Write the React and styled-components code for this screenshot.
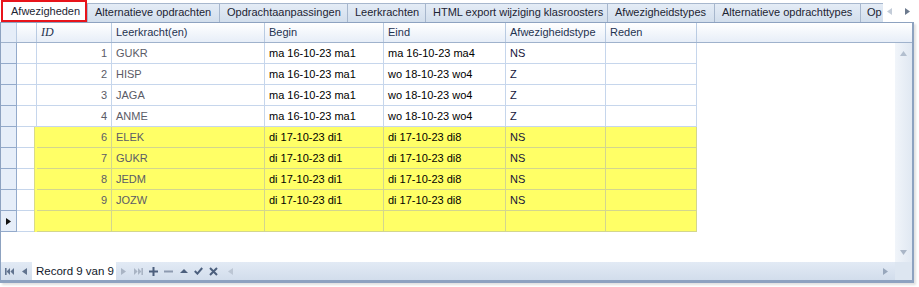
import React from "react";
import styled, { createGlobalStyle } from "styled-components";

const GlobalStyle = createGlobalStyle`
  html, body {
    margin: 0;
    padding: 0;
    background: #fff;
  }
  body {
    font-family: "Liberation Sans", Arial, sans-serif;
    font-size: 11px;
    color: #1e2b3c;
  }
`;

const tabs = [
  { label: "Afwezigheden", w: 86, active: true },
  { label: "Alternatieve opdrachten", w: 133, first: true },
  { label: "Opdrachtaanpassingen", w: 128 },
  { label: "Leerkrachten", w: 78 },
  { label: "HTML export wijziging klasroosters", w: 182 },
  { label: "Afwezigheidstypes", w: 107 },
  { label: "Alternatieve opdrachttypes", w: 146 },
  { label: "Op", w: 22, tight: true },
];

const rows = [
  { id: 1, who: "GUKR", begin: "ma 16-10-23 ma1", end: "ma 16-10-23 ma4", type: "NS" },
  { id: 2, who: "HISP", begin: "ma 16-10-23 ma1", end: "wo 18-10-23 wo4", type: "Z" },
  { id: 3, who: "JAGA", begin: "ma 16-10-23 ma1", end: "wo 18-10-23 wo4", type: "Z" },
  { id: 4, who: "ANME", begin: "ma 16-10-23 ma1", end: "wo 18-10-23 wo4", type: "Z" },
  { id: 6, who: "ELEK", begin: "di 17-10-23 di1", end: "di 17-10-23 di8", type: "NS", hl: true },
  { id: 7, who: "GUKR", begin: "di 17-10-23 di1", end: "di 17-10-23 di8", type: "NS", hl: true },
  { id: 8, who: "JEDM", begin: "di 17-10-23 di1", end: "di 17-10-23 di8", type: "NS", hl: true },
  { id: 9, who: "JOZW", begin: "di 17-10-23 di1", end: "di 17-10-23 di8", type: "NS", hl: true },
];

const COLS = "16px 20px 75px 153px 119px 122px 100px 91px 1fr";

const Tri = ({ dir = "right", color = "#555", size = 7 }) => {
  const pts = {
    right: "1,0 6,3.5 1,7",
    left: "6,0 1,3.5 6,7",
    up: "0,6 3.5,1 7,6",
    down: "0,1 3.5,6 7,1",
  }[dir];
  return (
    <svg width={size} height={size} viewBox="0 0 7 7">
      <polygon points={pts} fill={color} />
    </svg>
  );
};

const App = () => {
  return (
    <Page>
      <GlobalStyle />
      <TabStrip>
        <TabList>
          {tabs.map((t) => (
            <Tab
              key={t.label}
              $w={t.w}
              $active={t.active}
              $first={t.first}
              $tight={t.tight}
            >
              {t.label}
            </Tab>
          ))}
        </TabList>
        <TabArrows>
          <Tri dir="left" color="#c3ccd8" />
          <Tri dir="right" color="#6c7a8e" />
        </TabArrows>
      </TabStrip>

      <Frame>
        <HeaderRow>
          <HeadCell $ind />
          <HeadCell />
          <HeadCell $serif>ID</HeadCell>
          <HeadCell>Leerkracht(en)</HeadCell>
          <HeadCell>Begin</HeadCell>
          <HeadCell>Eind</HeadCell>
          <HeadCell>Afwezigheidstype</HeadCell>
          <HeadCell>Reden</HeadCell>
          <HeadCell $last />
        </HeaderRow>

        <Body>
          <Rows>
            {rows.map((r) => (
              <Row key={r.id}>
                <IndCell />
                <Cell />
                <Cell $hl={r.hl} $right $muted $edge={r.hl}>
                  {r.id}
                </Cell>
                <Cell $hl={r.hl} $muted>
                  {r.who}
                </Cell>
                <Cell $hl={r.hl}>{r.begin}</Cell>
                <Cell $hl={r.hl}>{r.end}</Cell>
                <Cell $hl={r.hl} $navy>
                  {r.type}
                </Cell>
                <Cell $hl={r.hl} />
                <Filler />
              </Row>
            ))}
            <Row>
              <IndCell>
                <Tri dir="right" color="#111" size={7} />
              </IndCell>
              <Cell />
              <Cell $hl $edge />
              <Cell $hl />
              <Cell $hl />
              <Cell $hl />
              <Cell $hl />
              <Cell $hl />
              <Filler />
            </Row>
          </Rows>
          <VScroll>
            <Tri dir="up" color="#b3bfcf" />
            <Tri dir="down" color="#aab6c7" />
          </VScroll>
        </Body>

        <Footer>
          <Navigator>
            <NavButton $w={16}>
              <svg width="9" height="7" viewBox="0 0 9 7">
                <rect x="0" y="0" width="1.6" height="7" fill="#61738f" />
                <polygon points="5,0 1.6,3.5 5,7" fill="#61738f" />
                <polygon points="9,0 5.4,3.5 9,7" fill="#61738f" />
              </svg>
            </NavButton>
            <NavButton $w={15}>
              <Tri dir="left" color="#61738f" />
            </NavButton>
            <RecordBox>Record 9 van 9</RecordBox>
            <NavButton $w={15}>
              <Tri dir="right" color="#a9b4c4" />
            </NavButton>
            <NavButton $w={15}>
              <svg width="9" height="7" viewBox="0 0 9 7">
                <polygon points="0,0 3.6,3.5 0,7" fill="#a9b4c4" />
                <polygon points="4,0 7.4,3.5 4,7" fill="#a9b4c4" />
                <rect x="7.4" y="0" width="1.6" height="7" fill="#a9b4c4" />
              </svg>
            </NavButton>
            <NavButton $w={15}>
              <svg width="9" height="9" viewBox="0 0 9 9">
                <rect x="3.5" y="0" width="2" height="9" fill="#4c5f7d" />
                <rect x="0" y="3.5" width="9" height="2" fill="#4c5f7d" />
              </svg>
            </NavButton>
            <NavButton $w={15}>
              <svg width="9" height="9" viewBox="0 0 9 9">
                <rect x="0" y="3.5" width="9" height="2" fill="#8d9ab0" />
              </svg>
            </NavButton>
            <NavButton $w={15}>
              <svg width="8" height="6" viewBox="0 0 8 6">
                <polygon points="0,5 4,1 8,5" fill="#4c5f7d" />
              </svg>
            </NavButton>
            <NavButton $w={15}>
              <svg width="9" height="8" viewBox="0 0 9 8">
                <polyline points="0.8,4 3.4,6.6 8.2,1" fill="none" stroke="#4c5f7d" strokeWidth="2" />
              </svg>
            </NavButton>
            <NavButton $w={15}>
              <svg width="9" height="9" viewBox="0 0 9 9">
                <path d="M1 1 L8 8 M8 1 L1 8" stroke="#4c5f7d" strokeWidth="2" />
              </svg>
            </NavButton>
          </Navigator>
          <HScroll>
            <Tri dir="left" color="#bcc6d4" />
            <Tri dir="right" color="#98a7bc" />
          </HScroll>
          <Corner />
        </Footer>
      </Frame>
    </Page>
  );
};

export default App;

const Page = styled.div`
  width: 919px;
  height: 287px;
  overflow: hidden;
  background: #fff;
`;

const TabStrip = styled.div`
  display: flex;
  align-items: flex-end;
  height: 22px;
`;

const TabList = styled.div`
  display: flex;
  align-items: flex-end;
  width: 882px;
  flex: none;
  overflow: hidden;
  padding-left: 1px;
  height: 22px;
`;

const Tab = styled.div`
  flex: none;
  box-sizing: border-box;
  width: ${(p) => p.$w}px;
  height: ${(p) => (p.$active ? 22 : 19)}px;
  line-height: ${(p) => (p.$active ? 18 : 17)}px;
  padding-left: ${(p) => (p.$active ? 8 : p.$tight ? 6 : 7)}px;
  white-space: nowrap;
  overflow: hidden;
  color: #1c2433;
  background: ${(p) =>
    p.$active ? "#fff" : "linear-gradient(#e4ecf6, #d2deec)"};
  border: ${(p) => (p.$active ? "2px solid #e8141b" : "1px solid #a7b7cd")};
  border-left-width: ${(p) => (p.$active ? 2 : p.$first ? 1 : 0)}px;
  border-right-width: ${(p) => (p.$tight ? 0 : p.$active ? 2 : 1)}px;
  border-bottom: ${(p) => (p.$active ? "2px solid #e8141b" : "none")};
`;

const TabArrows = styled.div`
  flex: 1;
  display: flex;
  align-items: center;
  gap: 11px;
  height: 22px;
  padding-left: 3px;
`;

const Frame = styled.div`
  width: 911px;
  display: flex;
  flex-direction: column;
  border: 1px solid #8da2c0;
  border-right-width: 2px;
  border-bottom-width: 3px;
  box-shadow: 2px 2px 2px rgba(0, 0, 0, 0.12);
`;

const HeaderRow = styled.div`
  display: grid;
  grid-template-columns: ${COLS};
  height: 20px;
  box-sizing: border-box;
  border-bottom: 1px solid #9fb2cc;
  background: linear-gradient(#ffffff, #e7eef8);
`;

const HeadCell = styled.div`
  box-sizing: border-box;
  border-right: ${(p) => (p.$last ? "none" : "1px solid #b9cbe2")};
  background: ${(p) => (p.$ind ? "#e5edf8" : "transparent")};
  padding-left: 4px;
  line-height: 19px;
  color: #1f3350;
  white-space: nowrap;
  overflow: hidden;
  font-family: ${(p) =>
    p.$serif ? '"Liberation Serif", serif' : '"Liberation Sans", Arial, sans-serif'};
  font-style: ${(p) => (p.$serif ? "italic" : "normal")};
  font-size: ${(p) => (p.$serif ? "12px" : "11px")};
`;

const Body = styled.div`
  display: flex;
  height: 219px;
`;

const Rows = styled.div`
  width: 894px;
  background: #fff;
`;

const Row = styled.div`
  display: grid;
  grid-template-columns: ${COLS};
  height: 21px;
`;

const IndCell = styled.div`
  box-sizing: border-box;
  background: #e6eef9;
  border-right: 1px solid #93aacb;
  border-bottom: 1px solid #93aacb;
  display: flex;
  align-items: center;
  justify-content: center;
`;

const Cell = styled.div`
  box-sizing: border-box;
  position: relative;
  background: ${(p) => (p.$hl ? "#ffff66" : "#fff")};
  border-right: 1px solid ${(p) => (p.$hl ? "#d3d68e" : "#c6d6ec")};
  border-bottom: 1px solid ${(p) => (p.$hl ? "#d3d68e" : "#c6d6ec")};
  padding: 0 4px;
  line-height: 20px;
  white-space: nowrap;
  text-align: ${(p) => (p.$right ? "right" : "left")};
  color: ${(p) => (p.$muted ? "#5b5b66" : p.$navy ? "#14143a" : "#000")};
  box-shadow: ${(p) =>
    p.$edge ? "-2px 0 0 #ffff66, -3px 0 0 #d8da8a" : "none"};
`;

const Filler = styled.div`
  background: #fff;
`;

const VScroll = styled.div`
  width: 17px;
  display: flex;
  flex-direction: column;
  align-items: center;
  justify-content: space-between;
  padding: 7px 0 6px;
  box-sizing: border-box;
  background: linear-gradient(90deg, #f1f5fa, #e0e8f2);
`;

const Footer = styled.div`
  display: flex;
  height: 18px;
  background: linear-gradient(#e2eaf5, #d2ddec);
`;

const Navigator = styled.div`
  display: flex;
  align-items: stretch;
  width: 220px;
  flex: none;
`;

const NavButton = styled.div`
  width: ${(p) => p.$w}px;
  flex: none;
  display: flex;
  align-items: center;
  justify-content: center;
`;

const RecordBox = styled.div`
  width: 84px;
  flex: none;
  background: #fff;
  padding-left: 4px;
  box-sizing: border-box;
  font-size: 11.5px;
  line-height: 18px;
  color: #10182a;
  white-space: nowrap;
`;

const HScroll = styled.div`
  flex: 1;
  display: flex;
  align-items: center;
  justify-content: space-between;
  padding: 0 6px 0 6px;
`;

const Corner = styled.div`
  width: 17px;
  flex: none;
  background: #dde6f1;
`;
